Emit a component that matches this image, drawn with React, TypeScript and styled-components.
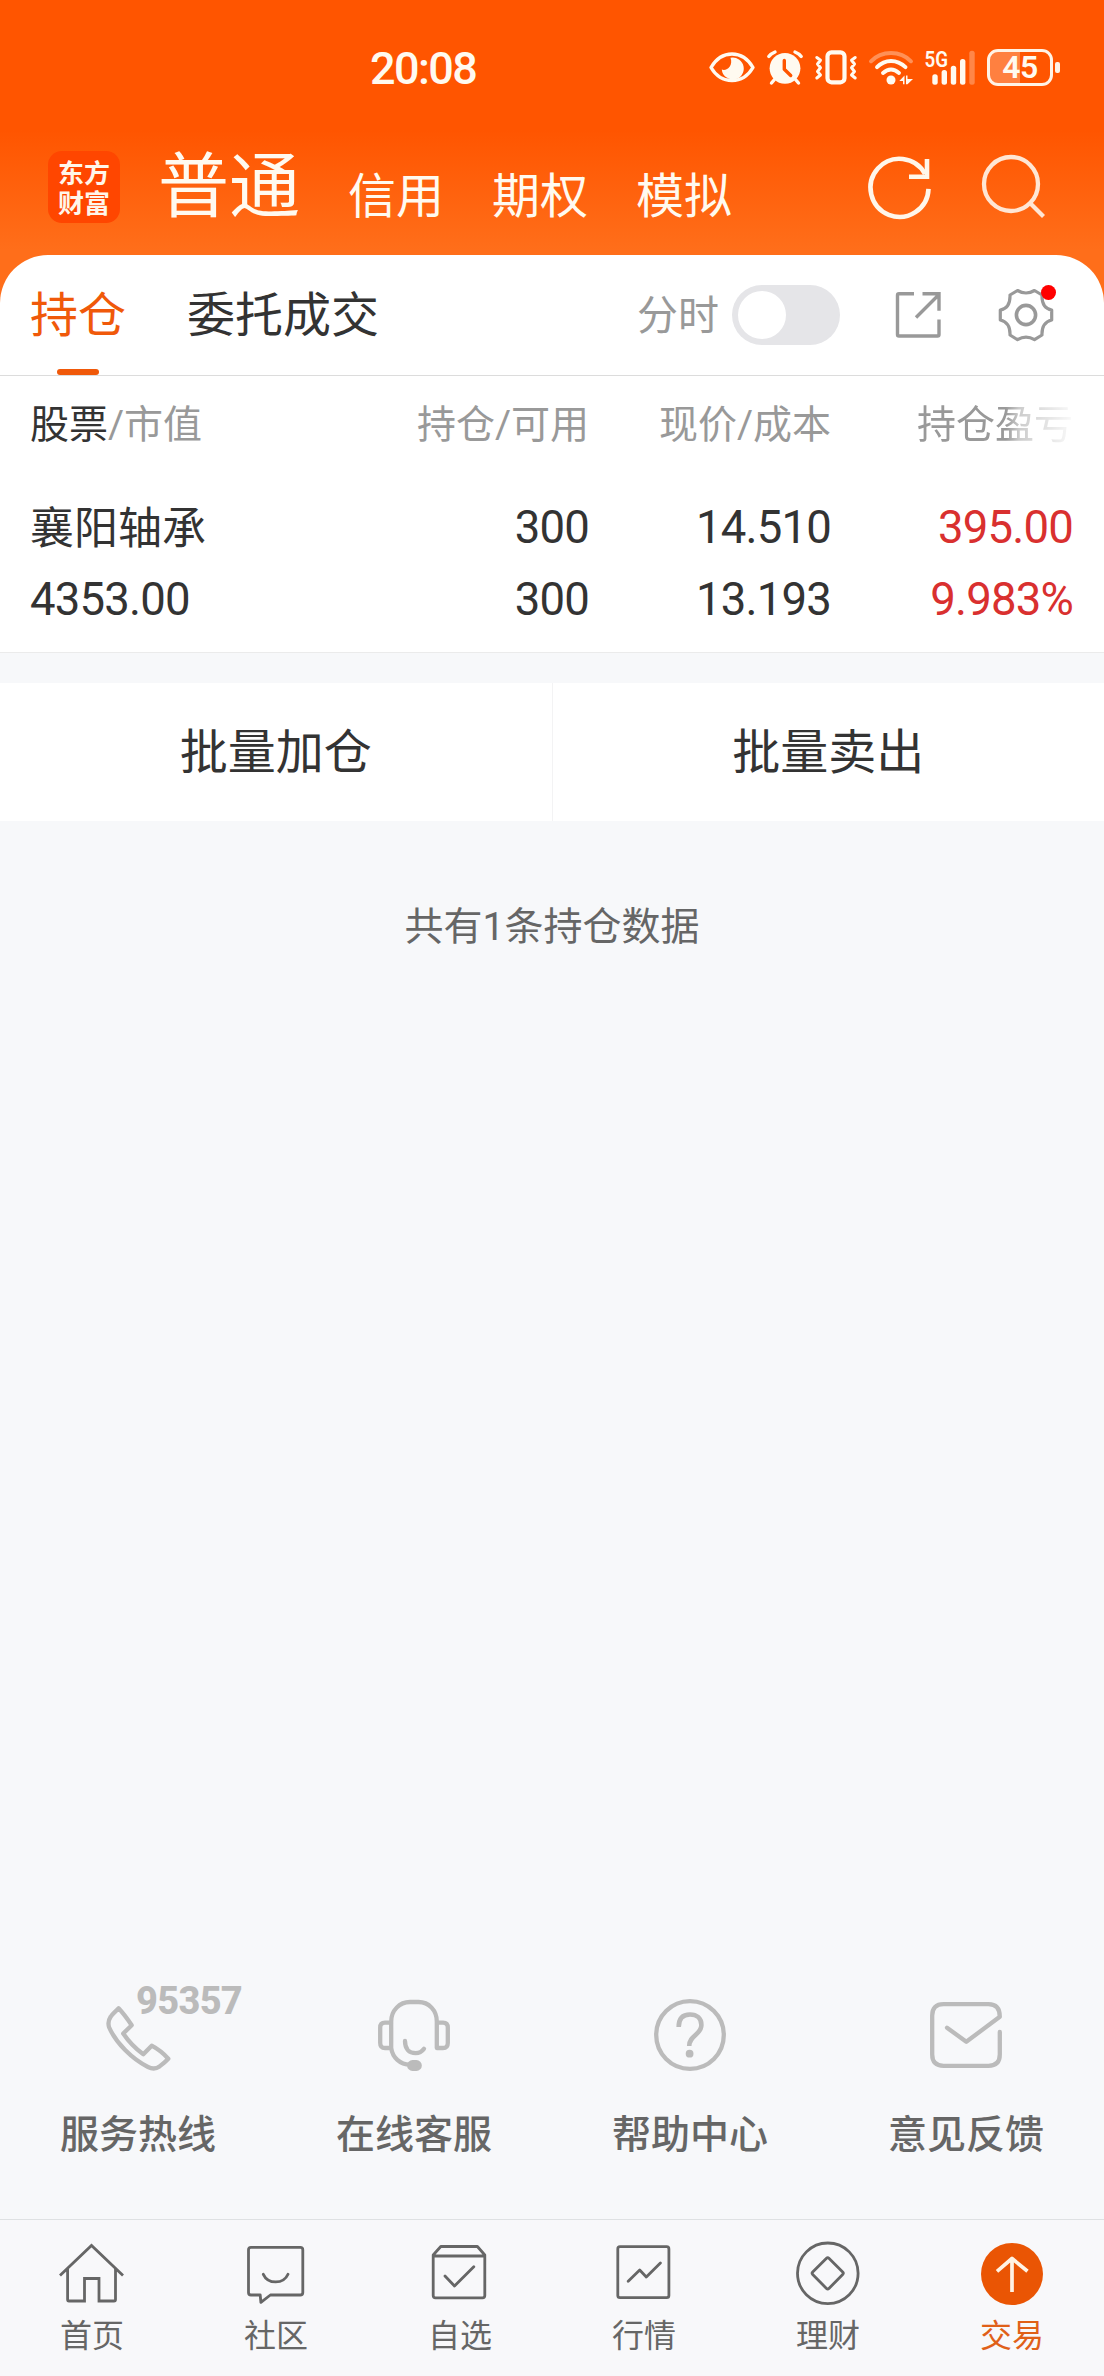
import React from 'react';
import styled, { createGlobalStyle } from 'styled-components';

const ORANGE = '#f0590a';
const INK = '#333333';
const MUTED = '#999999';

const GlobalStyle = createGlobalStyle`
  * { box-sizing: border-box; }
  body {
    margin: 0;
    background: #f7f8fa;
    font-family: Roboto, "Noto Sans CJK SC", sans-serif;
    color: ${INK};
  }
  svg { display: block; flex: none; overflow: visible; }
`;

const Screen = styled.div`
  width: 1104px;
  height: 2376px;
  display: flex;
  flex-direction: column;
  background: #f7f8fa;
  overflow: hidden;
`;

const Top = styled.div`
  background: linear-gradient(#ff5500 0, #ff5500 130px, #ff6e1a 250px, #ff6e1a 100%);
`;

const StatusBar = styled.div`
  height: 134px;
  padding: 0 44px 0 370px;
  display: flex;
  align-items: center;
  justify-content: space-between;
`;

const Clock = styled.span`
  padding-top: 3px;
  font-size: 45px;
  line-height: 50px;
  font-weight: 500;
  letter-spacing: -1.6px;
  color: #fffaf0;
`;

const StatusIcons = styled.div`
  display: flex;
  gap: 12px;
`;

const BatteryWrap = styled.div`
  display: flex;
  align-items: center;
  gap: 2px;
`;

const BatteryBody = styled.div<{ $level: number }>`
  width: 66px;
  height: 37px;
  border: 3px solid #fff3e6;
  border-radius: 11px;
  background: linear-gradient(90deg, #ff8040 ${p => p.$level}%, transparent ${p => p.$level}%);
  display: flex;
  align-items: center;
  justify-content: center;
  font-size: 32px;
  font-weight: 600;
  line-height: 32px;
  letter-spacing: -0.5px;
  color: #fffaf0;
`;

const BatteryTip = styled.i`
  width: 5px;
  height: 11px;
  border-radius: 2px;
  background: #fff3e6;
`;

const AccountBar = styled.div`
  height: 121px;
  padding: 17px 59px 0 48px;
  display: flex;
  align-items: flex-start;
`;

const Logo = styled.div`
  width: 72px;
  height: 72px;
  padding: 6px 10px;
  border-radius: 14px;
  background: #ff4600;
  color: #fff6ea;
  font-family: "Noto Sans CJK SC", sans-serif;
  font-size: 26px;
  font-weight: 700;
  line-height: 30px;
  word-break: break-all;
`;

const AccountTabs = styled.div`
  display: flex;
  align-items: flex-start;
  gap: 48px;
  margin-left: 38px;
  color: #fffaf0;
`;

const AccountTab = styled.span<{ $active?: boolean }>`
  font-size: ${p => (p.$active ? 71 : 48)}px;
  line-height: 72px;
  padding-top: ${p => (p.$active ? 0 : 10)}px;
`;

const AccountActions = styled.div`
  margin-left: auto;
  padding-top: 5px;
  display: flex;
  gap: 49px;
`;

const Card = styled.section`
  background: #fff;
  border-radius: 48px 48px 0 0;
`;

const TabBar = styled.div`
  height: 121px;
  border-bottom: 1px solid #dcdcdc;
  padding: 0 49px 0 30px;
  display: flex;
  align-items: stretch;
`;

const Tab = styled.div<{ $active?: boolean }>`
  display: flex;
  flex-direction: column;
  align-items: center;
  justify-content: space-between;
  margin-right: 61px;
  padding-top: 30px;
  font-size: 48px;
  line-height: 62px;
  color: ${p => (p.$active ? ORANGE : INK)};
  &::after {
    content: '';
    width: 42px;
    height: 6px;
    border-radius: 3px;
    background: ${p => (p.$active ? ORANGE : 'transparent')};
  }
`;

const Tools = styled.div`
  margin-left: auto;
  display: flex;
  align-items: center;
`;

const ToolLabel = styled.span`
  padding-top: 2px;
  font-size: 41px;
  line-height: 60px;
  color: ${MUTED};
  margin-right: 13px;
`;

const Toggle = styled.div`
  width: 108px;
  height: 60px;
  border-radius: 30px;
  padding: 6px;
  background: #e5e5e8;
  margin-right: 54px;
  &::before {
    content: '';
    display: block;
    width: 48px;
    height: 48px;
    border-radius: 50%;
    background: #fff;
  }
`;

const GearWrap = styled.div`
  position: relative;
  margin-left: 55px;
`;

const Dot = styled.i`
  position: absolute;
  right: -1px;
  top: -1px;
  width: 15px;
  height: 15px;
  border-radius: 50%;
  background: #ff0000;
`;

const Grid = styled.div`
  display: grid;
  grid-template-columns: 317px 242px 242px 242px;
  padding: 0 30px;
`;

const HeadRow = styled(Grid)`
  height: 96px;
  line-height: 98px;
  font-size: 39px;
  color: ${MUTED};
`;

const HeadCell = styled.span<{ $fade?: boolean }>`
  text-align: right;
  white-space: nowrap;
  &:first-child { text-align: left; }
  ${p => p.$fade && 'mask-image: linear-gradient(90deg, #000 175px, rgba(0,0,0,.5) 188px, transparent 248px);'}
`;

const Strong = styled.b`
  font-weight: 400;
  color: ${INK};
`;

const StockRow = styled(Grid)`
  height: 181px;
  padding-top: 20px;
  border-bottom: 1px solid #ebebeb;
`;

const Cell = styled.div<{ $up?: boolean }>`
  text-align: right;
  font-size: 45.5px;
  line-height: 72px;
  letter-spacing: -0.8px;
  color: ${p => (p.$up ? '#d9302f' : INK)};
  &:first-child { text-align: left; }
`;

const StockName = styled.div`
  font-size: 44px;
  line-height: 74px;
  margin-bottom: -2px;
  letter-spacing: 0;
`;

const BatchRow = styled.div`
  margin-top: 30px;
  height: 138px;
  flex: none;
  display: flex;
  background: #fff;
`;

const BatchButton = styled.button`
  flex: 1;
  border: 0;
  padding: 2px 0 0;
  background: none;
  font: inherit;
  font-size: 48px;
  line-height: 136px;
  color: ${INK};
  & + & { border-left: 1px solid #f3f3f4; }
`;

const Summary = styled.p`
  margin: 76px 0 0;
  text-align: center;
  font-size: 39px;
  line-height: 60px;
  color: #666;
`;

const Services = styled.div`
  margin-top: auto;
  height: 220px;
  display: grid;
  grid-template-columns: repeat(4, 1fr);
`;

const Service = styled.div`
  position: relative;
  display: flex;
  flex-direction: column;
  align-items: center;
  gap: 34px;
  color: #bbbbbb;
`;

const ServiceLabel = styled.span`
  font-size: 39px;
  font-weight: 500;
  line-height: 60px;
  color: #666;
`;

const Hotline = styled.span`
  position: absolute;
  left: 136px;
  top: -19px;
  font-size: 38px;
  line-height: 42px;
  font-weight: 800;
  letter-spacing: -0.7px;
`;

const NavBar = styled.nav`
  height: 157px;
  border-top: 1px solid #dfe1e3;
  background: #f8f8fa;
  padding-top: 17px;
  display: grid;
  grid-template-columns: repeat(6, 1fr);
`;

const NavItem = styled.div<{ $active?: boolean }>`
  display: flex;
  flex-direction: column;
  align-items: center;
  gap: 4px;
  font-size: 32px;
  line-height: 46px;
  color: ${p => (p.$active ? '#e06018' : '#666')};
`;

const Line: React.FC<{ w?: number; children: React.ReactNode }> = ({ w = 4.3, children }) => (
  <svg width="72" height="72" viewBox="0 0 72 72" fill="none" stroke="currentColor" strokeWidth={w} strokeLinecap="round" strokeLinejoin="round">
    {children}
  </svg>
);

const EyeIcon = () => (
  <svg width="46" height="38" fill="none">
    <path d="M2 19.5C7 11 14 6 23 6s16 5 21 13.500C39 28 32 32.600 23 32.600S7 28 2 19.500Z" stroke="#fffaf0" strokeWidth="3.400" strokeLinejoin="round" />
    <path d="M21.500 9.800A11 11 0 1 1 12.800 21.500C17.500 23.500 24.500 18 21.500 9.800Z" fill="#fffaf0" />
  </svg>
);

const AlarmIcon = () => (
  <svg width="36" height="38" fill="none" strokeLinecap="round">
    <circle cx="18" cy="20.300" r="15.400" fill="#fffaf0" />
    <path d="M1.800 8.500Q4 5.500 8 4M34.200 8.500Q32 5.500 28 4M7.500 31.500L4.500 35M28.500 31.500L31.500 35" stroke="#fffaf0" strokeWidth="3.400" />
    <path d="M17.300 12.500V21.300L23.700 27.500" stroke="#ff5500" strokeWidth="3.400" strokeLinejoin="round" />
  </svg>
);

const VibrateIcon = () => (
  <svg width="42" height="38" fill="none" stroke="#fffaf0" strokeLinecap="round" strokeLinejoin="round">
    <rect x="12.500" y="4.300" width="17" height="30" rx="4" strokeWidth="4.200" />
    <path d="M1.800 9.500L5.500 12.200L2.500 16L5.500 19.800L2.500 23.500L5.500 27L1.800 30M40.200 9.500L36.500 12.200L39.500 16L36.500 19.800L39.500 23.500L36.500 27L40.200 30" strokeWidth="3" />
  </svg>
);

const WifiIcon = () => (
  <svg width="44" height="38" fill="none" stroke="#fffaf0" strokeLinecap="round" strokeWidth="3.900">
    <path d="M2 13.300Q10 5 22 5T42 13.300" opacity="0.360" />
    <path d="M8 19.200Q14 13 22 13T36.500 19.200" />
    <path d="M14 24.900Q18 21.500 22 21.500T30 24.900" />
    <circle cx="22" cy="32" r="4.500" fill="#fffaf0" stroke="none" />
    <path d="M30.300 33L35.500 27.500V36.300H34V33ZM37 27.500H38.500V31H44L38.500 36.300H37Z" fill="#fffaf0" stroke="none" />
  </svg>
);

const SignalIcon = () => (
  <svg width="50" height="38" fill="#fffaf0">
    <text x="-0.500" y="18.600" fontSize="22" fontWeight="600" textLength="23.500" lengthAdjust="spacingAndGlyphs">5G</text>
    <rect x="7.300" y="26.300" width="5.400" height="10.400" rx="2.500" />
    <rect x="16.600" y="22" width="5.400" height="14.700" rx="2.500" />
    <rect x="25.800" y="17.700" width="5.400" height="19" rx="2.500" />
    <rect x="35" y="11" width="5.400" height="25.700" rx="2.500" />
    <rect x="44.300" y="2.700" width="5.400" height="34" rx="2.500" opacity="0.300" />
  </svg>
);

const RefreshIcon = () => (
  <svg width="64" height="64" viewBox="0 0 64 64" fill="none" stroke="#fff6ea" strokeWidth="4.600">
    <path d="M60.500 32.800A29 29 0 1 1 57 18" />
    <path d="M59 3V20.700H41" />
  </svg>
);

const SearchIcon = () => (
  <svg width="64" height="64" viewBox="0 0 64 64" fill="none" stroke="#ffe6d4" strokeWidth="4.300">
    <circle cx="30" cy="28" r="27" />
    <path d="M48.500 46.500L62.500 60.500" />
  </svg>
);

const ExportIcon = () => (
  <svg width="48" height="50" viewBox="0 0 48 50" fill="none" stroke={MUTED} strokeWidth="3.400">
    <path d="M20 3.700H5Q3.500 3.700 3.500 5.200V44.500Q3.500 46 5 46H43.500Q45 46 45 44.500V29.500" />
    <path d="M28.500 3.700H45V20.700M22 27.500L45 4.500" />
  </svg>
);

const GearIcon = () => (
  <svg width="58" height="58" viewBox="-2 -2 58 58" fill="none" stroke={MUTED} strokeWidth="3.200" strokeLinejoin="round">
    <path d="M18.500 2.500Q27 7.500 35.500 2.500L43 7Q42.500 20 52.700 22V32Q42.500 34.500 43 47L35.500 51.700Q27 46.500 18.500 51.700L11 47Q11.500 34.500 1.300 32V22Q11.500 20 11 7Z" />
    <circle cx="27" cy="27" r="9.600" strokeWidth="3.600" />
  </svg>
);

const services = [
  {
    label: '服务热线',
    hotline: '95357',
    icon: <path d="M16.600 9.300C21.500 14.500 25.500 20 29.700 26.300L21.200 34.500C27 43 34 50 41.300 55.300L49.700 46.700C56 50 61.500 54.500 66.300 59.700C63 63.200 60 65.500 57.500 67.500C54 70 50 70 46 68C30 60 14 44 7.200 28.500C6 25 6.500 21 8.500 18C10.500 14.500 13.500 12.500 16.600 9.300Z" />,
  },
  {
    label: '在线客服',
    icon: (
      <>
        <path d="M13.200 49V22.500C13.200 11.500 21.500 3 32 3H40.500C51 3 58.800 11.500 58.800 22.500V49H65Q69.800 49 69.800 44V28.700Q69.800 23.700 65 23.700H58.800M13.200 23.700H7Q2.200 23.700 2.200 28.700V44Q2.200 49 7 49H13.200C14.500 58.500 22 65.700 32 65.700" />
        <path d="M27 42C27 50 31 54.200 37.700 54.200C41 54.200 44 52.500 46 49.700" />
        <rect x="31.200" y="63.200" width="10.500" height="6.600" rx="3.300" fill="currentColor" />
      </>
    ),
  },
  {
    label: '帮助中心',
    icon: (
      <>
        <circle cx="36" cy="36" r="33.800" />
        <path d="M24.700 28C24.700 19.500 29 15.500 36 15.500S47.400 19.500 47.400 26C47.400 36 35.200 36 35.200 47" strokeLinecap="butt" strokeWidth="4.600" />
        <circle cx="35.600" cy="54.700" r="3.900" fill="currentColor" stroke="none" />
      </>
    ),
  },
  {
    label: '意见反馈',
    icon: <path d="M69.800 33V55.500Q69.800 66.800 58.500 66.800H13.500Q2.200 66.800 2.200 55.500V16.500Q2.200 5.200 13.500 5.200H58.500Q69.800 5.200 69.800 17.700L36.300 42.800L17 28.700" />,
  },
];

const navItems = [
  { label: '首页', icon: <path d="M4 38.500L35.500 8.500L67 38.500M11.600 32V62.500Q11.600 64 13 64H28.500V41.500H43V64H58Q59.500 64 59.500 62.500V32" strokeLinecap="butt" strokeLinejoin="miter" /> },
  { label: '社区', icon: <path d="M11 10.300H60.300Q62.800 10.300 62.800 12.800V55.500Q62.800 58 60.300 58H30.400L20.900 65.300L20.200 58H11Q8.500 58 8.500 55.500V12.800Q8.500 10.300 11 10.300ZM23.300 37.300C28 47.500 43.500 47.500 48 37.300" /> },
  { label: '自选', icon: <path d="M9.200 19H60.800V58.500Q60.800 60.800 58.500 60.800H11.500Q9.200 60.800 9.200 58.500V18L16.800 9.500H53.400L60.800 18V19M21 39L30.500 49L49.800 29.800" /> },
  { label: '行情', icon: <path d="M12 9.700H58.700Q60.900 9.700 60.900 11.900V58.500Q60.900 60.700 58.700 60.700H12Q9.800 60.700 9.800 58.500V11.900Q9.800 9.700 12 9.700ZM20.200 44.300L31.700 33L38.300 40L52.400 26" /> },
  { label: '理财', icon: <><circle cx="35.800" cy="36.300" r="30.300" /><path d="M34.500 21.300Q35.700 20.100 36.900 21.300L50.700 35.100Q51.900 36.300 50.700 37.500L36.900 51.500Q35.700 52.700 34.500 51.500L20.700 37.500Q19.500 36.300 20.700 35.100Z" /></> },
  { label: '交易', active: true, icon: <><circle cx="36" cy="37" r="31" fill="#ea5504" stroke="none" /><path d="M36 55V21.500M21 34.300L36 21.500L51.500 34.300" stroke="#fff3e4" strokeWidth="3.700" strokeLinecap="butt" /></> },
];

export default function App() {
  return (
    <Screen>
      <GlobalStyle />
      <Top>
        <StatusBar>
          <Clock>20:08</Clock>
          <StatusIcons>
            <EyeIcon />
            <AlarmIcon />
            <VibrateIcon />
            <WifiIcon />
            <SignalIcon />
            <BatteryWrap>
              <BatteryBody $level={50}>45</BatteryBody>
              <BatteryTip />
            </BatteryWrap>
          </StatusIcons>
        </StatusBar>
        <AccountBar>
          <Logo>东方财富</Logo>
          <AccountTabs>
            <AccountTab $active>普通</AccountTab>
            <AccountTab>信用</AccountTab>
            <AccountTab>期权</AccountTab>
            <AccountTab>模拟</AccountTab>
          </AccountTabs>
          <AccountActions>
            <RefreshIcon />
            <SearchIcon />
          </AccountActions>
        </AccountBar>
        <Card>
          <TabBar>
            <Tab $active>持仓</Tab>
            <Tab>委托成交</Tab>
            <Tools>
              <ToolLabel>分时</ToolLabel>
              <Toggle />
              <ExportIcon />
              <GearWrap><GearIcon /><Dot /></GearWrap>
            </Tools>
          </TabBar>
          <HeadRow>
            <HeadCell><Strong>股票</Strong>/市值</HeadCell>
            <HeadCell>持仓/可用</HeadCell>
            <HeadCell>现价/成本</HeadCell>
            <HeadCell $fade>持仓盈亏</HeadCell>
          </HeadRow>
          <StockRow>
            <Cell><StockName>襄阳轴承</StockName>4353.00</Cell>
            <Cell>300<br />300</Cell>
            <Cell>14.510<br />13.193</Cell>
            <Cell $up>395.00<br />9.983%</Cell>
          </StockRow>
        </Card>
      </Top>
      <BatchRow>
        <BatchButton>批量加仓</BatchButton>
        <BatchButton>批量卖出</BatchButton>
      </BatchRow>
      <Summary>共有1条持仓数据</Summary>
      <Services>
        {services.map(s => (
          <Service key={s.label}>
            <Line>{s.icon}</Line>
            {s.hotline && <Hotline>{s.hotline}</Hotline>}
            <ServiceLabel>{s.label}</ServiceLabel>
          </Service>
        ))}
      </Services>
      <NavBar>
        {navItems.map(n => (
          <NavItem key={n.label} $active={n.active}>
            <Line w={2.8}>{n.icon}</Line>
            {n.label}
          </NavItem>
        ))}
      </NavBar>
    </Screen>
  );
}
